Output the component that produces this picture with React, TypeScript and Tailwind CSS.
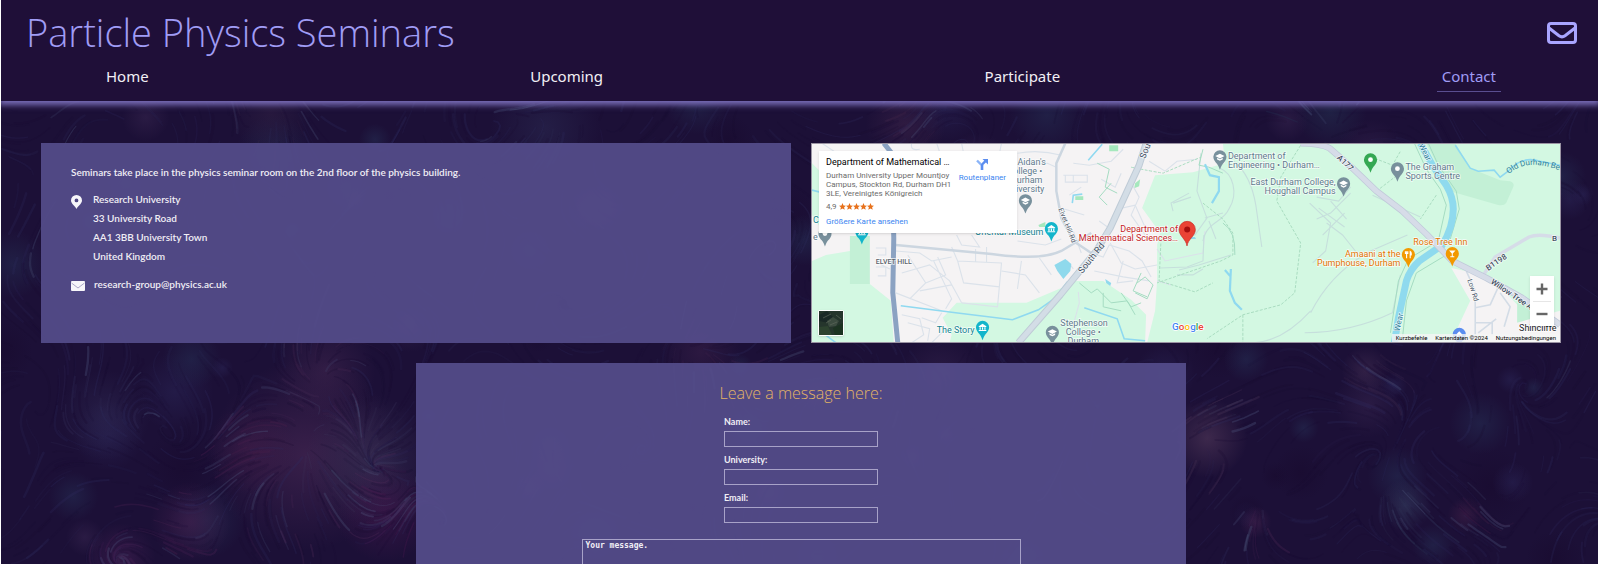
import React from "react";

type Point = [number, number];

/* ---------- Background: filaments flowing around a few bright nodes ---------- */

type Node = { x: number; y: number; r: number; power: number; color: string; glow: number };

const NODES: Node[] = [
  { x: 305, y: 455, r: 95, power: 1, color: "#4c2a57", glow: 0.6 },
  { x: 370, y: 460, r: 65, power: -0.6, color: "#3b3458", glow: 0.6 },
  { x: 385, y: 512, r: 50, power: -0.4, color: "#4c1a52", glow: 0.5 },
  { x: 325, y: 370, r: 50, power: 0.5, color: "#452852", glow: 0.5 },
  { x: 250, y: 450, r: 45, power: -0.3, color: "#4a1f4c", glow: 0.45 },
  { x: 120, y: 558, r: 35, power: -0.5, color: "#4b2358", glow: 0.5 },
  { x: 190, y: 522, r: 40, power: 0.4, color: "#4a2252", glow: 0.55 },
  { x: 105, y: 415, r: 45, power: 0.5, color: "#302b56", glow: 0.5 },
  { x: 1207, y: 438, r: 40, power: 0.8, color: "#4b3355", glow: 0.7 },
  { x: 1405, y: 505, r: 26, power: 0.6, color: "#343d60", glow: 0.6 },
  { x: 1465, y: 515, r: 18, power: -0.5, color: "#48224a", glow: 0.5 },
  { x: 1365, y: 370, r: 24, power: -0.5, color: "#402b50", glow: 0.6 },
  { x: 1255, y: 522, r: 16, power: 0.3, color: "#4a2652", glow: 0.5 },
  { x: 545, y: 128, r: 55, power: 0.6, color: "#2c2b54", glow: 0.5 },
  { x: 905, y: 125, r: 40, power: -0.6, color: "#42264c", glow: 0.5 },
  { x: 270, y: 112, r: 40, power: 0.4, color: "#382648", glow: 0.4 },
  { x: 1330, y: 112, r: 36, power: 0.4, color: "#243252", glow: 0.5 },
  { x: 700, y: 352, r: 40, power: 0.5, color: "#3c214a", glow: 0.5 },
];

function seeded(seed: number) {
  let s = seed;
  return () => {
    s = (s * 16807) % 2147483647;
    return s / 2147483647;
  };
}

function direction(x: number, y: number): Point {
  let vx = Math.sin(y / 31 + x / 90) * 0.009 + Math.cos(x / 23 + y / 40) * 0.006;
  let vy = Math.cos(x / 37 - y / 70) * 0.013 + Math.sin(y / 19) * 0.004;
  for (const n of NODES) {
    const dx = x - n.x;
    const dy = y - n.y;
    const d = dx * dx + dy * dy + 900;
    vx += (n.power * (dx - dy * 0.6)) / d;
    vy += (n.power * (dy + dx * 0.6)) / d;
  }
  const len = Math.hypot(vx, vy) || 1;
  return [vx / len, vy / len];
}

function streamline(x: number, y: number, steps: number) {
  let d = `M${x.toFixed(1)} ${y.toFixed(1)}`;
  for (let i = 0; i < steps; i++) {
    const [dx, dy] = direction(x, y);
    x += dx * 4;
    y += dy * 4;
    d += `L${x.toFixed(1)} ${y.toFixed(1)}`;
  }
  return d;
}

function makeFilaments() {
  const rand = seeded(4217);
  const out: { d: string; color: string; opacity: number; width: number }[] = [];
  for (let i = 0; i < 2000; i++) {
    const x = rand() * 1598;
    const y = 100 + rand() * 464;
    const pick = rand();
    out.push({
      d: streamline(x, y, 4 + Math.floor(rand() * 11)),
      color: pick > 0.98 ? "#5b6c90" : pick > 0.5 ? "#302f63" : "#180c30",
      opacity: 0.08 + rand() * 0.17,
      width: 1 + rand() * 1.6,
    });
  }
  for (const n of NODES) {
    for (let i = 0; i < n.r * 0.7; i++) {
      const a = rand() * Math.PI * 2;
      const q = Math.sqrt(rand()) * n.r;
      const pick = rand();
      out.push({
        d: streamline(n.x + Math.cos(a) * q, n.y + Math.sin(a) * q, 3 + Math.floor(rand() * 9)),
        color: pick > 0.8 ? "#505a80" : pick > 0.4 ? n.color : "#1a0c33",
        opacity: 0.12 + rand() * 0.22,
        width: 1 + rand() * 1.5,
      });
    }
  }
  return out;
}

const TINTS = ["#282252", "#33224c", "#242a50", "#180a2e"];

function makeClouds() {
  const rand = seeded(991);
  return Array.from({ length: 90 }, () => ({
    x: rand() * 1598,
    y: 100 + rand() * 464,
    r: 10 + rand() * 30,
    tint: Math.floor(rand() * 4),
  }));
}

const FILAMENTS = makeFilaments();
const CLOUDS = makeClouds();

function Backdrop() {
  return (
    <svg
      aria-hidden="true"
      className="absolute inset-0 h-full w-full"
      viewBox="0 0 1598 564"
      preserveAspectRatio="xMidYMid slice"
    >
      <defs>
        {NODES.map((n, i) => (
          <radialGradient key={i} id={`node-${i}`}>
            <stop offset="0" stopColor={n.color} stopOpacity={n.glow} />
            <stop offset="1" stopColor={n.color} stopOpacity="0" />
          </radialGradient>
        ))}
        {TINTS.map((tint, i) => (
          <radialGradient key={tint} id={`tint-${i}`}>
            <stop offset="0" stopColor={tint} stopOpacity=".6" />
            <stop offset="1" stopColor={tint} stopOpacity="0" />
          </radialGradient>
        ))}
      </defs>
      <rect width="1598" height="564" fill="#1c1037" />
      {CLOUDS.map((c, i) => (
        <circle key={i} cx={c.x} cy={c.y} r={c.r} fill={`url(#tint-${c.tint})`} />
      ))}
      {NODES.map((n, i) => (
        <circle key={i} cx={n.x} cy={n.y} r={n.r} fill={`url(#node-${i})`} />
      ))}
      {FILAMENTS.map((f, i) => (
        <path key={i} d={f.d} fill="none" stroke={f.color} strokeOpacity={f.opacity} strokeWidth={f.width} strokeLinecap="round" />
      ))}
    </svg>
  );
}

/* ---------- Map ---------- */

type PinKind = "school" | "museum" | "dot" | "food" | "bar" | "home";

function Pin({ x, y, color, kind }: { x: number; y: number; color: string; kind: PinKind }) {
  return (
    <g transform={`translate(${x} ${y})`}>
      <path d="M-6.6-.4A6.6 6.6 0 0 1 6.6-.4C6.6 2.6 4.8 4.4 3 6.6C1.4 8.8 .8 10.4 0 12.5C-.8 10.4-1.4 8.8-3 6.6C-4.8 4.4-6.6 2.6-6.6-.4Z" fill={color} />
      {kind === "dot" && <circle r="2.4" cy="-.5" fill="#fff" />}
      {kind === "school" && (
        <g fill="#fff">
          <path d="M-4.6-1.2L0-3.6L4.6-1.2L0 1.2Z" />
          <path d="M-2.8.6L0 2L2.8.6V2.2L0 3.6L-2.8 2.2Z" />
        </g>
      )}
      {kind === "museum" && (
        <g fill="#fff">
          <path d="M-3.8-1.6L0-4L3.8-1.6V-.8H-3.8Z" />
          <path d="M-3-.6H-1.8V2H-3ZM-.6-.6H.6V2H-.6ZM1.8-.6H3V2H1.8ZM-3.8 2.2H3.8V3.2H-3.8Z" />
        </g>
      )}
      {kind === "food" && (
        <g stroke="#fff" strokeWidth="1.1" fill="none">
          <path d="M-1.8-3.8V3.2M-3-3.8V-1.4H-.6V-3.8M1.8 3.2V-3.6C3-3 3-1.4 2.8 0H1.8" />
        </g>
      )}
      {kind === "bar" && <path d="M-3.2-3.6H3.2L.5-.4V2.2H2V3.2H-2V2.2H-.5V-.4Z" fill="#fff" />}
      {kind === "home" && <path d="M-2.6 2.6V-.8L0-3.4L2.6-.8V2.6H1V.6H-1V2.6Z" fill="#fff" />}
    </g>
  );
}

function Label({
  x,
  y,
  lines,
  color,
  anchor = "start",
  size = 9,
  rotate = 0,
  weight = 400,
}: {
  x: number;
  y: number;
  lines: string[];
  color: string;
  anchor?: "start" | "middle" | "end";
  size?: number;
  rotate?: number;
  weight?: number;
}) {
  return (
    <text
      transform={`translate(${x} ${y}) rotate(${rotate})`}
      textAnchor={anchor}
      fontSize={size}
      fontWeight={weight}
      fill={color}
      stroke="#ffffff"
      strokeOpacity="0.75"
      strokeWidth="1.5"
      paintOrder="stroke"
    >
      {lines.map((line, i) => (
        <tspan key={line} x="0" y={i * 9}>
          {line}
        </tspan>
      ))}
    </text>
  );
}

const STREETS = [
  "M10 0L22 8M100 0Q98 8 108 6M125 0L128 9M150 0L152 10M190 0L188 10M206 22L236 20L245 24",
  "M206 10Q228 6 250 12M262 20L278 22L300 18L312 6M252 32H276V39H254V32M262 32V39",
  "M84 108L108 110L120 118L140 114M96 112L114 140L98 156M114 140L134 132L126 114",
  "M90 130L118 122L138 138L150 160M122 118L140 156L134 166M108 148L140 142M84 150L130 168",
  "M140 104L146 118L190 120L186 164L150 160M146 118L152 140L188 144M164 106V119M175 104V119",
  "M64 105H74V112H66M64 124H74V133H66M66 120L78 126M145 92L150 102L168 104L160 92M206 98L234 102L250 96",
  "M90 172L108 176L112 192L100 200M110 175L124 180L130 170M96 180L118 186L116 198",
  "M190 128L214 132L228 150M210 118L206 146M228 115L240 132M120 200L134 186",
  "M280 110L292 114L298 102L318 108L331 118L340 134M299 86L288 78M306 66L324 62L333 82L345 88",
  "M299 100L310 120L324 126L346 122M283 128L312 134L338 138M262 126L256 118L248 124",
  "M318 36L328 54L320 72L334 92M338 18L354 28L366 18L386 16M290 36L304 44L310 30",
  "M258 52L270 44M253 66L273 72M262 88L270 110M312 118L306 140L322 138",
  "M267 149L268 160L262 182L260 200M346 138L360 142M346 106L354 118L392 110L394 88",
];

const GREEN_STREETS = [
  "M409 25C422 30 428 50 418 66C412 80 396 78 392 98M386 48L396 75L384 92L372 92M362 60L380 54",
  "M362 68L360 60L378 50M386 48L390 10M394 75L412 70M398 78L405 96M368 127L388 122L420 112",
  "M349 125L376 124L392 118L393 92M366 132H382L392 126M423 18Q440 32 445 62L451 104",
  "M500 170Q520 130 560 108L597 92M499 60L520 80L515 108L502 120M540 50L520 70L506 76",
  "M516 80L532 92L548 112M506 54L528 58L540 44M562 52L610 74M500 168C480 190 460 200 440 200",
  "M590 132L582 170Q540 190 494 190M508 65L534 84M512 92L534 70M520 58L536 76",
];

const PATHS = [
  "M490 2L470 34L466 58L490 100L484 150L470 162L432 172L396 196",
  "M350 96L348 138L384 149L402 140M432 172V200M566 48L592 28M626 52L610 76M556 12L582 22L590 8",
  "M320 24Q340 28 352 30L380 18L390 14M392 60L412 76L422 90V112L410 118L346 140",
];

const TREES = [
  "M268 140L280 150L286 146L300 160L316 158L324 172M330 130L322 148L336 154M286 20L298 26L294 44L306 50",
  "M326 140L334 134L342 142L336 156L324 150M310 150L320 164L330 160M292 150V164L310 168",
  "M392 6L388 22L398 24L412 30M300 40L288 54L296 62M412 80Q425 88 424 112",
];

function MapDrawing() {
  const slate = "#5f7a8c";
  const gray = "#78909c";
  const road = "#d6dce8";
  return (
    <svg
      role="img"
      aria-label="Map of Durham"
      className="absolute inset-0 h-full w-full font-['Roboto',sans-serif]"
      viewBox="0 0 750 200"
      preserveAspectRatio="xMidYMid slice"
    >
      <rect width="750" height="200" fill="#f5f3f4" />
      <g fill="#d3f8e2">
        <path d="M0 20L12 32L12 90L0 72ZM0 118L14 112L38 108L58 141L79 158L82 200H0Z" />
        <path d="M145 160H215L250 145L265 138H292L320 157L335 172L334 200H138L140 192L131 175Z" />
        <path d="M412 0L414 20L382 29L344 32L331 65L349 90L346 102V138L344 168L336 200H750V0Z" />
      </g>
      <path d="M38 93H58V141H38Z" fill="#c3f0d6" />
      <path d="M616 0H645L660 25L690 37L700 38Q705 40 703 44L696 60Q694 63 688 62L640 48Z" fill="#c3f0d6" />
      <path d="M707 160L735 168V180H707Z" fill="#c3f0d6" />
      <path d="M641 125L655 128L687 140L707 162V180L750 168V200H656L646 188L660 158Z" fill="#f5f3f4" />
      <path d="M298 2H307V8H298ZM324 40L329 36L328 43L323 45ZM264 53H272V57H264ZM227 82L234 79V84H228Z" fill="#a5e8bd" />

      <g fill="none" stroke="#dbe2ea" strokeWidth="1.1">
        {STREETS.map((d) => (
          <path key={d} d={d} />
        ))}
      </g>
      <g fill="none" stroke="#c6dfdc" strokeWidth="1.1">
        {GREEN_STREETS.map((d) => (
          <path key={d} d={d} />
        ))}
      </g>
      <g fill="none" stroke="#a9dcc0" strokeWidth="1" strokeDasharray="3 1.5">
        {PATHS.map((d) => (
          <path key={d} d={d} />
        ))}
      </g>
      <g fill="none" stroke="#a5dcc2" strokeWidth="1">
        {TREES.map((d) => (
          <path key={d} d={d} />
        ))}
        <path d="M604 0L616 26L630 46L636 62L628 98L598 116L588 138L580 190M618 0L628 22L646 48L649 66L640 96M636 112L606 130L596 158L592 196" />
      </g>

      <g fill="none" stroke="#8fd9f0" strokeWidth="1.6">
        <path d="M89 163L144 170L201 177L227 167L244 155L256 139" />
        <path d="M0 47L8 49M8 188L24 200M277 17L291 1M261 60L262 52L271 51" />
        <path d="M394 21L399 32L408 34V48L401 60M420 126L419 148L424 160L431 167M414 127L420 134" strokeWidth="2.2" />
        <path d="M273 165L306 176L313 196L334 198M645 2L660 25L668 28L684 27L690 34L698 28Q712 12 730 18L750 22" />
      </g>
      <path d="M243 122L254 116L260 121L259 128L252 136L246 128ZM294 136L300 140L299 143L295 140ZM379 94L384 94L385 96H379Z" fill="#8fd9ec" />
      <path d="M610 0L622 22L636 42Q643 54 643 66Q643 84 632 102L609 118Q600 126 596 138L588 175L584 200" fill="none" stroke="#8fdaee" strokeWidth="7" />

      <g fill="none" strokeLinejoin="round">
        <path d="M84 102L180 111Q230 118 250 108L280 90M254 0L245 20V48L250 75L262 98L280 110" stroke="#ccd6e0" strokeWidth="2.5" />
        <path d="M72 0L80 10L82 95L81 150L86 200" stroke="#8ba2c2" strokeWidth="5" />
        <path d="M335 0L328 22L299 85L285 108L249 152L207 200" stroke="#bfcbd6" strokeWidth="7" />
        <path d="M335 0L328 22L299 85L285 108L249 152L207 200" stroke="#d3dde6" strokeWidth="5" />
        <path d="M672 134L685 114L719 94Q728 90 750 95" stroke={road} strokeWidth="3.5" />
        <path d="M656 128L665 148V198M665 165L680 162L690 140M665 180H682V192M690 150L700 164L694 184M668 190L686 176" stroke="#d3dce6" strokeWidth="1.6" />
        <path d="M490 0Q510 0 519 5L542 25L566 48L592 68L616 91L642 118L676 135L712 155L750 182" stroke="#c0cad9" strokeWidth="6.5" />
        <path d="M490 0Q510 0 519 5L542 25L566 48L592 68L616 91L642 118L676 135L712 155L750 182" stroke="#d6dce8" strokeWidth="5" />
      </g>

      <Pin x={214} y={58} color={gray} kind="school" />
      <Pin x={13} y={91} color={gray} kind="dot" />
      <Pin x={50} y={89} color="#12b5cb" kind="museum" />
      <Pin x={240} y={86} color="#12b5cb" kind="museum" />
      <Pin x={171} y={185} color="#12b5cb" kind="museum" />
      <Pin x={241} y={190} color={gray} kind="school" />
      <Pin x={409} y={14} color={gray} kind="school" />
      <Pin x={533} y={41} color={gray} kind="school" />
      <Pin x={560} y={17} color="#34a853" kind="dot" />
      <Pin x={587} y={26} color={gray} kind="dot" />
      <Pin x={598} y={112} color="#f29900" kind="food" />
      <Pin x={642} y={111} color="#f29900" kind="bar" />
      <Pin x={649} y={192} color="#5b8def" kind="home" />

      <Label x={206} y={22} lines={["Aidan's"]} color={slate} />
      <Label x={231} y={31} lines={["College •", "Durham"]} color={slate} anchor="end" />
      <Label x={233} y={49} lines={["University"]} color={slate} anchor="end" />
      <Label x={232} y={92} lines={["Oriental Museum"]} color="#128391" anchor="end" />
      <Label x={1} y={80} lines={["C"]} color="#128391" />
      <Label x={1} y={97} lines={["e"]} color={slate} />
      <Label x={64} y={121} lines={["ELVET HILL"]} color="#5d646c" size={7} weight={500} />
      <Label x={163} y={190} lines={["The Story"]} color="#128391" anchor="end" />
      <Label x={249} y={183} lines={["Stephenson"]} color={slate} />
      <Label x={272} y={192} lines={["College •", "Durham"]} color={slate} anchor="middle" />
      <Label x={417} y={16} lines={["Department of", "Engineering • Durham…"]} color={slate} />
      <Label x={525} y={42} lines={["East Durham College,", "Houghall Campus"]} color={slate} anchor="end" />
      <Label x={595} y={27} lines={["The Graham", "Sports Centre"]} color={slate} />
      <Label x={367} y={89} lines={["Department of", "Mathematical Sciences…"]} color="#c5221f" anchor="end" />
      <Label x={590} y={114} lines={["Amaani at the", "Pumphouse, Durham"]} color="#e37400" anchor="end" />
      <Label x={630} y={102} lines={["Rose Tree Inn"]} color="#e37400" anchor="middle" />
      <Label x={334} y={16} lines={["Sou"]} color="#3f4d60" rotate={-68} />
      <Label x={271} y={131} lines={["South Rd"]} color="#3f4d60" rotate={-51} />
      <Label x={247} y={66} lines={["Elvet Hill Rd"]} color="#4d5a6b" size={7} rotate={68} />
      <Label x={526} y={15} lines={["A177"]} color="#3f4d60" size={8} weight={500} rotate={44} />
      <Label x={678} y={128} lines={["B1198"]} color="#3f4d60" size={8} weight={500} rotate={-34} />
      <Label x={742} y={98} lines={["B"]} color="#3f4d60" size={8} weight={500} />
      <Label x={680} y={140} lines={["Willow Tree Ave"]} color="#3f4d60" size={8} weight={500} rotate={34} />
      <Label x={657} y={137} lines={["Low Rd"]} color="#4d5a6b" size={7} rotate={72} />
      <Label x={608} y={2} lines={["Wear"]} color="#2f7f99" size={8} rotate={62} />
      <Label x={589} y={189} lines={["Wear"]} color="#2f7f99" size={8} rotate={-78} />
      <path id="beck" d="M699 31Q716 14 752 28" fill="none" />
      <text fontSize="8" fill="#2f7f99">
        <textPath href="#beck">Old Durham Bec</textPath>
      </text>
      <Label x={709} y={188} lines={["Shincliffe"]} color="#202124" size={9} />

      <path d="M376 103C375 96 368 93 368 86.500A8.200 8.200 0 0 1 384.400 86.500C384.400 93 377 96 376 103Z" fill="#ea4335" stroke="#c5221f" strokeWidth=".6" />
      <circle cx="376.200" cy="86.500" r="3" fill="#a50e0e" />

      <text x="361" y="187" fontSize="10" fontWeight="500" stroke="#fff" strokeWidth="1.500" paintOrder="stroke">
        <tspan fill="#4285f4">G</tspan>
        <tspan fill="#ea4335">o</tspan>
        <tspan fill="#fbbc04">o</tspan>
        <tspan fill="#4285f4">g</tspan>
        <tspan fill="#34a853">l</tspan>
        <tspan fill="#ea4335">e</tspan>
      </text>
    </svg>
  );
}

function PlaceCard() {
  return (
    <div className="absolute left-[7px] top-[7px] flex h-[82px] w-[198px] justify-between bg-white pl-[7px] pr-[11px] shadow-sm">
      <div className="flex flex-col whitespace-nowrap pt-1.5 text-[8px] leading-[9px] text-[#6b6b6b]">
        <h3 className="text-[9px] font-normal leading-[11px] text-black">Department of Mathematical …</h3>
        <p className="mt-[3px]">
          Durham University Upper Mountjoy
          <br />
          Campus, Stockton Rd, Durham DH1
          <br />
          3LE, Vereinigtes Königreich
        </p>
        <p className="mt-1 flex items-center gap-0.5">
          <span>4,9</span>
          <span className="flex" aria-label="five stars">
            {[0, 1, 2, 3, 4].map((i) => (
              <svg key={i} className="h-[7px] w-[7px]" viewBox="0 0 24 24" fill="#e7711b" aria-hidden="true">
                <path d="M12 0L15.500 8.200L24 9L17.500 14.800L19.500 23.500L12 18.800L4.500 23.500L6.500 14.800L0 9L8.500 8.200Z" />
              </svg>
            ))}
          </span>
        </p>
        <a href="#karte" className="mt-1.5 text-[8px] text-[#3a84f0]">
          Größere Karte ansehen
        </a>
      </div>
      <a href="#route" className="flex flex-col items-center gap-[3px] pt-2 text-[8px] leading-[10px] text-[#3a84f0]">
        <svg className="h-[11px] w-3" viewBox="0 0 12 11" aria-hidden="true">
          <path d="M6 11V6.500L1 1.500" fill="none" stroke="#8ab4f8" strokeWidth="2.400" />
          <path d="M6 11V7Q6 5.500 7 4.500L9.500 2.200" fill="none" stroke="#5b8def" strokeWidth="2.400" />
          <path d="M6.500 0H12V5.500Z" fill="#5b8def" />
        </svg>
        Routenplaner
      </a>
    </div>
  );
}

function CampusMap() {
  return (
    <section className="relative h-[200px] overflow-hidden border border-[#9a93a3] font-['Roboto',sans-serif]">
      <MapDrawing />
      <PlaceCard />
      <button
        type="button"
        aria-label="Satellite view"
        className="absolute bottom-1.5 left-1.5 h-[26px] w-[26px] overflow-hidden rounded-xs bg-white p-px shadow"
      >
        <svg className="h-full w-full bg-[#25352c]" viewBox="0 0 24 24" aria-hidden="true">
          <path d="M0 4L8 0L14 6L10 12L0 10Z" fill="#1a2826" />
          <path d="M8 10L14 6L20 10L17 15L10 16Z" fill="#3c4c40" />
          <path d="M0 16L9 15L13 24H0Z" fill="#2d432f" />
          <path d="M14 17L24 12V24H16Z" fill="#1c3321" />
          <path d="M7 12L12 9M11 14L18 11M4 7L12 3M17 4L22 8" stroke="#5c665a" strokeWidth=".7" />
        </svg>
      </button>
      <div className="absolute bottom-4 right-1.5 flex w-6 flex-col items-center bg-white shadow-sm">
        <button type="button" aria-label="Zoom in" className="grid h-[25px] w-full place-items-center">
          <svg className="h-3 w-3" viewBox="0 0 12 12" aria-hidden="true">
            <path d="M6 .5V11.500M.5 6H11.500" stroke="#666" strokeWidth="2.400" />
          </svg>
        </button>
        <span className="h-px w-[18px] bg-[#e6e6e6]" />
        <button type="button" aria-label="Zoom out" className="grid h-6 w-full place-items-center">
          <svg className="h-3 w-3" viewBox="0 0 12 12" aria-hidden="true">
            <path d="M.5 6H11.500" stroke="#666" strokeWidth="2.400" />
          </svg>
        </button>
      </div>
      <div className="absolute bottom-0 right-0 flex gap-2 bg-[#f5f5f5]/80 px-1 text-[6px] leading-2 text-black">
        <button type="button">Kurzbefehle</button>
        <span>Kartendaten ©2024</span>
        <a href="#terms">Nutzungsbedingungen</a>
      </div>
    </section>
  );
}

/* ---------- Page ---------- */

const LINKS = ["Home", "Upcoming", "Participate", "Contact"];

function Header() {
  return (
    <header className="relative bg-[#1f0f38] pb-[9px] shadow-[0_2px_6px_2px_#7a6db8]">
      <div className="flex h-[64px] items-center justify-between pl-[25px] pr-[21px]">
        <h1 className="font-['Open_Sans',sans-serif] text-[38px] font-light leading-none text-[#a09cf5]">
          Particle Physics Seminars
        </h1>
        <a href="#contact-form" aria-label="Send a message" className="pt-0.5 text-[#a9a5ff]">
          <svg className="h-[22px] w-[30px]" viewBox="0 0 30 22" fill="none" stroke="currentColor" strokeWidth="3" aria-hidden="true">
            <rect x="1.500" y="1.500" width="27" height="19" rx="2.500" />
            <path d="M2 6L12 13.800Q15 16 18 13.800L28 6" />
          </svg>
        </a>
      </div>
      <nav className="flex justify-between pl-[100px] pr-[97px]">
        {LINKS.map((name) => (
          <a
            key={name}
            href={`#${name.toLowerCase()}`}
            aria-current={name === "Contact" ? "page" : undefined}
            className={
              name === "Contact"
                ? "h-7 border-b border-[#5a4e90] px-[5px] font-['Noto_Sans',sans-serif] text-[15px] leading-[25px] text-[#a09cf5]"
                : "h-7 px-[5px] font-['Noto_Sans',sans-serif] text-[15px] leading-[25px] text-[#f2eff5]"
            }
          >
            {name}
          </a>
        ))}
      </nav>
    </header>
  );
}

function AddressPanel() {
  return (
    <section className="min-h-[200px] bg-[#554d8b]/92 px-[30px] pt-5 font-['Lato',sans-serif] text-[10px] font-semibold leading-[19px] text-[#f0eef5]">
      <p>Seminars take place in the physics seminar room on the 2nd floor of the physics building.</p>
      <div className="mt-2 flex">
        <svg className="mr-[11px] mt-[5px] h-3.5 w-[11px]" viewBox="0 0 11 14" aria-hidden="true">
          <path
            fill="#f7f6fa"
            fillRule="evenodd"
            d="M5.500 14C4.500 11 0 8.800 0 5.400A5.500 5.400 0 0 1 11 5.400C11 8.800 6.500 11 5.500 14ZM5.500 3.500A1.900 1.900 0 1 0 5.500 7.300A1.900 1.900 0 1 0 5.500 3.500Z"
          />
        </svg>
        <address className="not-italic">
          Research University
          <br />
          33 University Road
          <br />
          AA1 3BB University Town
          <br />
          United Kingdom
        </address>
      </div>
      <div className="mt-[9px] flex">
        <svg className="mr-[9px] mt-1.5 h-2.5 w-3.5" viewBox="0 0 14 10" aria-hidden="true">
          <rect width="14" height="10" rx="1" fill="#f7f6fa" />
          <path d="M.5 2L7 7L13.500 2" fill="none" stroke="#8a84b0" strokeWidth=".7" />
        </svg>
        <a href="mailto:research-group@physics.ac.uk">research-group@physics.ac.uk</a>
      </div>
    </section>
  );
}

const FIELDS = ["Name", "University", "Email"];

function MessageForm() {
  return (
    <form
      id="contact-form"
      className="mx-auto mt-5 flex w-full max-w-[770px] flex-col items-center bg-[#554d8b]/92 px-6 pb-6 pt-[18px]"
    >
      <h2 className="text-[16px] font-light leading-6 text-[#e2b366]">Leave a message here:</h2>
      <div className="mt-[9px] flex w-[154px] flex-col gap-[5px]">
        {FIELDS.map((name) => (
          <div key={name} className="flex flex-col">
            <label htmlFor={name} className="font-['Lato',sans-serif] text-[9px] font-bold leading-4 text-[#f0eef5]">
              {name}:
            </label>
            <input id={name} name={name} className="mt-px h-4 border border-[#a8a2c8] bg-transparent px-1 text-[9px] text-white outline-none" />
          </div>
        ))}
      </div>
      <textarea
        aria-label="Your message"
        placeholder="Your message."
        rows={12}
        className="mt-4 w-full max-w-[439px] resize-none border border-[#a8a2c8] bg-transparent px-[3px] py-px font-['DejaVu_Sans_Mono',monospace] text-[8px] font-bold leading-[10px] text-white outline-none placeholder:text-[#f0eef5]"
      />
    </form>
  );
}

export default function App() {
  return (
    <div className="relative h-screen overflow-hidden border-l border-white bg-[#1c1037] font-['Open_Sans',sans-serif]">
      <Backdrop />
      <div className="relative h-full overflow-y-auto [scrollbar-width:none]">
        <Header />
        <main className="pb-10 pl-10 pr-[37px] pt-[42px]">
          <div className="grid grid-cols-2 gap-5">
            <AddressPanel />
            <CampusMap />
          </div>
          <MessageForm />
        </main>
      </div>
    </div>
  );
}
